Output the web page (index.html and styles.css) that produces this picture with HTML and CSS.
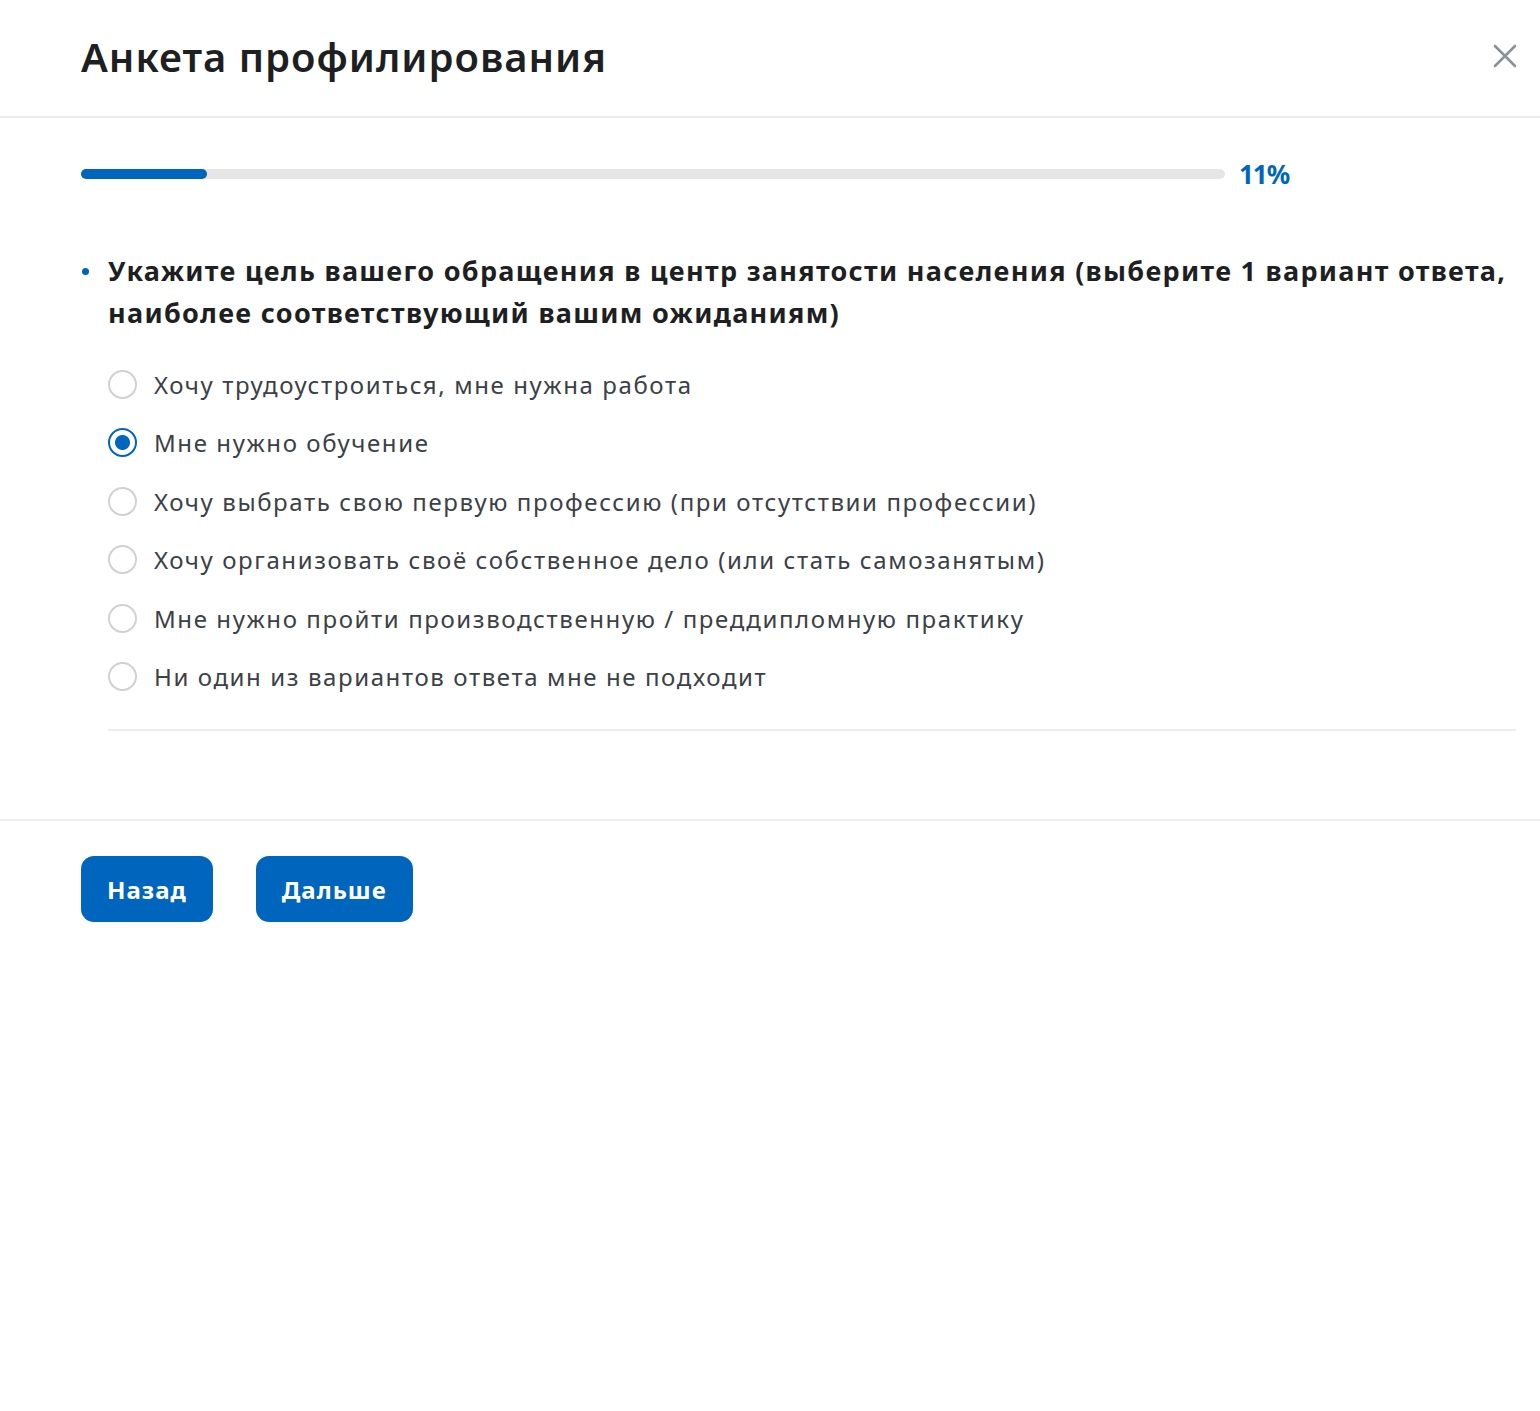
FILE: index.html
```html
<!DOCTYPE html>
<html lang="ru">
<head>
    <meta charset="utf-8">
    <title>Анкета профилирования</title>
    <link rel="stylesheet" href="styles.css">
</head>
<body>
    <div class="modal">
        <div class="modal-header">
            <h1 class="modal-title">Анкета профилирования</h1>
            <button class="close" aria-label="Закрыть">
                <svg width="26" height="26" viewBox="0 0 26 26">
                    <path d="M3 3 L23 23 M23 3 L3 23" stroke="#8c9197" stroke-width="2.6" stroke-linecap="round" fill="none"/>
                </svg>
            </button>
        </div>

        <div class="modal-body">
            <div class="progress">
                <div class="progress-track">
                    <div class="progress-fill" style="width: 11%"></div>
                </div>
                <span class="progress-value">11%</span>
            </div>

            <div class="question">
                <p class="question-text">Укажите цель вашего обращения в центр занятости населения (выберите 1 вариант ответа, наиболее соответствующий вашим ожиданиям)</p>

                <ul class="answers">
                    <li class="answer"><span class="radio"></span>Хочу трудоустроиться, мне нужна работа</li>
                    <li class="answer"><span class="radio radio-checked"></span>Мне нужно обучение</li>
                    <li class="answer"><span class="radio"></span>Хочу выбрать свою первую профессию (при отсутствии профессии)</li>
                    <li class="answer"><span class="radio"></span>Хочу организовать своё собственное дело (или стать самозанятым)</li>
                    <li class="answer"><span class="radio"></span>Мне нужно пройти производственную / преддипломную практику</li>
                    <li class="answer"><span class="radio"></span>Ни один из вариантов ответа мне не подходит</li>
                </ul>
            </div>
        </div>

        <div class="modal-footer">
            <button class="btn">Назад</button>
            <button class="btn">Дальше</button>
        </div>
    </div>
</body>
</html>
```

FILE: styles.css
```css
:root {
    --blue: #0065bd;
    --text: #1e1f22;
    --muted: #3c4047;
    --line: #ededed;
}

* {
    box-sizing: border-box;
}

body {
    margin: 0;
    background: #fff;
    font-family: "Noto Sans", "Open Sans", sans-serif;
    color: var(--text);
}

.modal-header {
    display: flex;
    align-items: center;
    justify-content: space-between;
    height: 118px;
    padding: 0 22px 0 81px;
    border-bottom: 2px solid var(--line);
}

.modal-title {
    margin: 0 0 4px;
    font-size: 40px;
    font-weight: 600;
    letter-spacing: 1px;
}

.close {
    border: none;
    background: none;
    padding: 0;
    margin-bottom: 4px;
    cursor: pointer;
    display: flex;
}

.modal-body {
    padding: 38px 24px 88px 81px;
}

.progress {
    display: flex;
    align-items: center;
    gap: 14px;
}

.progress-track {
    width: 1144px;
    height: 10px;
    border-radius: 5px;
    background: #e6e6e6;
}

.progress-fill {
    height: 100%;
    border-radius: 5px;
    background: var(--blue);
}

.progress-value {
    color: var(--blue);
    font-size: 26px;
    font-weight: 700;
    letter-spacing: -1px;
}

.question {
    margin-top: 58px;
}

.question-text {
    position: relative;
    margin: 0;
    padding-left: 27px;
    font-size: 27px;
    font-weight: 700;
    line-height: 42px;
    letter-spacing: 1.3px;
}

/* small blue dot in front of the question */
.question-text::before {
    content: "";
    position: absolute;
    left: 1px;
    top: 18px;
    width: 7px;
    height: 7px;
    border-radius: 50%;
    background: var(--blue);
}

.answers {
    list-style: none;
    margin: 21px 0 0 27px;
    padding: 0 0 23px;
    border-bottom: 2px solid var(--line);
}

.answer {
    display: flex;
    align-items: center;
    gap: 17px;
    height: 58.5px;
    font-size: 24px;
    letter-spacing: 1.6px;
    color: var(--muted);
}

.radio {
    flex: none;
    width: 29px;
    height: 29px;
    border-radius: 50%;
    border: 2px solid #cfd1d4;
}

.radio-checked {
    border-color: var(--blue);
    background: radial-gradient(circle, var(--blue) 0 7px, #fff 8px);
}

.modal-footer {
    display: flex;
    gap: 43px;
    padding: 35px 81px;
    border-top: 2px solid var(--line);
}

.btn {
    height: 66px;
    padding: 0 26px;
    border: none;
    border-radius: 13px;
    background: var(--blue);
    color: #fff;
    font-family: inherit;
    font-size: 24px;
    font-weight: 700;
    letter-spacing: 1px;
    cursor: pointer;
}
```
